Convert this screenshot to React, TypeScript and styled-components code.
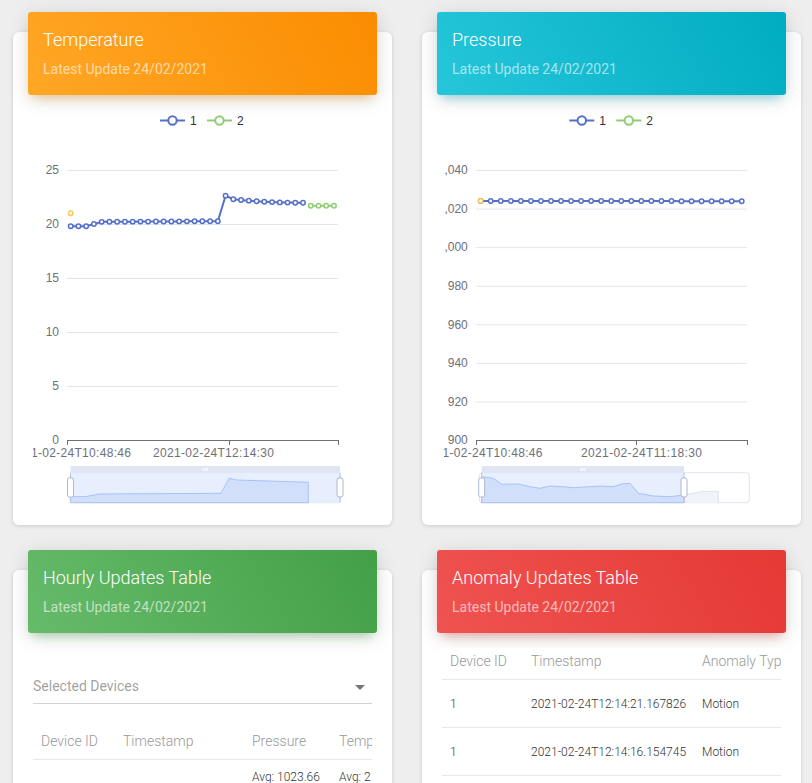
import styled, { createGlobalStyle } from "styled-components";

const GlobalStyle = createGlobalStyle`
	body {
		margin: 0;
		background: #eeeeee;
		font-family: Roboto, "Helvetica Neue", Arial, sans-serif;
	}
`;

const tones = {
	orange: { bg: "linear-gradient(60deg, #ffa726, #fb8c00)", glow: "rgba(255, 152, 0, 0.4)" },
	cyan: { bg: "linear-gradient(60deg, #26c6da, #00acc1)", glow: "rgba(0, 188, 212, 0.4)" },
	green: { bg: "linear-gradient(60deg, #66bb6a, #43a047)", glow: "rgba(76, 175, 80, 0.4)" },
	red: { bg: "linear-gradient(60deg, #ef5350, #e53935)", glow: "rgba(244, 67, 54, 0.4)" },
};

type Tone = keyof typeof tones;

const Page = styled.div`
	display: grid;
	grid-template-columns: 379px 379px;
	column-gap: 30px;
	row-gap: 45px;
	padding: 32px 11px 0 13px;
	align-items: start;
`;

const Card = styled.section`
	background: #fff;
	border-radius: 6px;
	box-shadow: 0 1px 4px 0 rgba(0, 0, 0, 0.14);
	display: flex;
	flex-direction: column;
`;

const CardHeader = styled.div<{ $tone: Tone }>`
	margin: -20px 15px 0;
	padding: 15px;
	border-radius: 3px;
	background: ${(p) => tones[p.$tone].bg};
	box-shadow: 0 4px 20px 0 rgba(0, 0, 0, 0.14), 0 7px 10px -5px ${(p) => tones[p.$tone].glow};
	color: #fff;
`;

const Title = styled.h4`
	margin: 0 0 7px;
	font-size: 18px;
	line-height: 25px;
	font-weight: 300;
`;

const Category = styled.p`
	margin: 0;
	font-size: 14px;
	line-height: 21px;
	font-weight: 400;
	color: rgba(255, 255, 255, 0.62);
`;

const ChartBody = styled.div<{ $inset: number }>`
	margin-top: 10px;
	padding: 0 0 15px ${(p) => p.$inset}px;

	svg {
		display: block;
		font-family: "Liberation Sans", Arial, sans-serif;
	}
`;

const TableBody = styled.div<{ $gap: number }>`
	margin-top: ${(p) => p.$gap}px;
	padding: 0 20px 20px;
`;

const SelectField = styled.div`
	position: relative;
	padding: 6px 0 7px;
	border-bottom: 1px solid #d2d2d2;
	font-size: 14px;
	line-height: 20px;
	color: rgba(0, 0, 0, 0.4);

	svg {
		position: absolute;
		right: 0;
		top: 5px;
		fill: rgba(0, 0, 0, 0.54);
	}
`;

const TableScroll = styled.div<{ $top: number }>`
	margin-top: ${(p) => p.$top}px;
	overflow: hidden;
	background: #fff;
`;

const Table = styled.table<{ $width: number }>`
	width: ${(p) => p.$width}px;
	table-layout: fixed;
	border-collapse: collapse;
`;

const HeadCell = styled.th<{ $w: number }>`
	box-sizing: border-box;
	width: ${(p) => p.$w}px;
	padding: 5px 8px 10px;
	text-align: left;
	font-size: 14px;
	line-height: 16px;
	font-weight: 300;
	color: #999;
	white-space: nowrap;
	overflow: hidden;
	border-bottom: 1px solid #e8e8e8;
`;

const Cell = styled.td<{ $dense?: boolean }>`
	box-sizing: border-box;
	padding: ${(p) => (p.$dense ? "10px 8px 10px" : "16px 8px 15px")};
	font-size: 12px;
	line-height: ${(p) => (p.$dense ? "14px" : "16px")};
	font-weight: 300;
	color: #333;
	white-space: nowrap;
	overflow: hidden;
	vertical-align: top;
	border-bottom: 1px solid #e8e8e8;
`;

/* ---------- chart ---------- */

const BLUE = "#5470c6";
const GREEN = "#91cc75";
const ORANGE = "#fac858";
const AXIS = "#6e7079";
const GRID = "#e0e6f1";

interface Series {
	color: string;
	start: number;
	values: number[];
}

interface ChartSpec {
	left: number;
	legendX: number;
	gridX: [number, number];
	labelEnd: number;
	yTicks: { label: string; value: number }[];
	yOf: (v: number) => number;
	xTicks: number[];
	xLabels: { text: string; x: number; anchor: "start" | "end" }[];
	x0: number;
	dx: number;
	series: Series[];
	slider: {
		from: number;
		to: number;
		sel: [number, number];
		selPath: string;
		restPath?: string;
	};
}

const SliderBox = ({ s }: { s: ChartSpec["slider"] }) => {
	const top = 466;
	const bodyTop = 472.7;
	const bottom = 502.7;
	const mid = (s.sel[0] + s.sel[1]) / 2;
	return (
		<g>
			<rect x={s.from} y={bodyTop} width={s.to - s.from} height={bottom - bodyTop} rx={3} fill="none" stroke="#dde3f0" />
			<rect x={s.sel[0]} y={bodyTop} width={s.sel[1] - s.sel[0]} height={bottom - bodyTop} fill="#e7eefd" />
			{s.restPath && <path d={s.restPath} fill="#f1f3f8" stroke="#dde3ee" strokeWidth={1} />}
			<path d={s.selPath} fill="#d1dffa" stroke="#a9c2f6" strokeWidth={1} />
			<rect x={s.sel[0]} y={top} width={s.sel[1] - s.sel[0]} height={bodyTop - top} fill="#dfe5f2" />
			{[-2, 0, 2].map((o) => (
				<line key={o} x1={mid + o} x2={mid + o} y1={top + 2} y2={top + 5} stroke="#fff" strokeWidth={1} />
			))}
			{s.sel.map((x) => (
				<g key={x}>
					<line x1={x} x2={x} y1={bodyTop} y2={bottom} stroke="#b8c3d8" strokeWidth={1} />
					<rect x={x - 3} y={478} width={6} height={19} rx={2} fill="#fff" stroke="#aeb9cf" strokeWidth={1} />
				</g>
			))}
		</g>
	);
};

const LineChart = ({ spec, inset }: { spec: ChartSpec; inset: number }) => {
	const { yOf } = spec;
	const axisY = yOf(spec.yTicks[0].value);
	const width = 361 - inset;
	return (
		<svg width={width} height={405} viewBox={`${spec.left} 105 ${width} 405`}>
			{[
				{ c: BLUE, x: spec.legendX, t: "1" },
				{ c: GREEN, x: spec.legendX + 47, t: "2" },
			].map((l) => (
				<g key={l.t}>
					<line x1={l.x} x2={l.x + 25} y1={120.5} y2={120.5} stroke={l.c} strokeWidth={2} />
					<circle cx={l.x + 12.5} cy={120.5} r={4.2} fill="#fff" stroke={l.c} strokeWidth={2} />
					<text x={l.x + 30} y={124.8} fontSize={12} fill="#333">
						{l.t}
					</text>
				</g>
			))}

			{spec.yTicks.map((t) => (
				<g key={t.label}>
					{t.value !== spec.yTicks[0].value && (
						<line x1={spec.gridX[0]} x2={spec.gridX[1]} y1={yOf(t.value) + 0.5} y2={yOf(t.value) + 0.5} stroke={GRID} />
					)}
					<text x={spec.labelEnd} y={yOf(t.value) + 4.3} fontSize={12} fill={AXIS} textAnchor="end">
						{t.label}
					</text>
				</g>
			))}

			<line x1={spec.gridX[0]} x2={spec.gridX[1] + 0.5} y1={axisY + 0.5} y2={axisY + 0.5} stroke={AXIS} />
			{spec.xTicks.map((x) => (
				<line key={x} x1={x} x2={x} y1={axisY} y2={axisY + 5} stroke={AXIS} />
			))}
			{spec.xLabels.map((l) => (
				<text
					key={l.text}
					x={l.x}
					y={457}
					fontSize={12}
					fill={AXIS}
					textAnchor={l.anchor}
					textLength={121}
					lengthAdjust="spacing"
				>
					{l.text}
				</text>
			))}

			{spec.series.map((s, si) => {
				const pts = s.values.map((v, i) => [spec.x0 + (s.start + i) * spec.dx, yOf(v)]);
				return (
					<g key={si}>
						{pts.length > 1 && (
							<polyline
								points={pts.map((p) => p.join(",")).join(" ")}
								fill="none"
								stroke={s.color}
								strokeWidth={2}
								strokeLinejoin="round"
							/>
						)}
						{pts.map(([x, y], i) => (
							<circle key={i} cx={x} cy={y} r={2.2} fill="#fff" stroke={s.color} strokeWidth={1.5} />
						))}
					</g>
				);
			})}

			<SliderBox s={spec.slider} />
		</svg>
	);
};

const tempBlue = [
	19.79, 19.79, 19.79, 20.0,
	...Array.from({ length: 16 }, (_, i) => 20.2 + i * 0.004),
	22.62, 22.29, 22.22, 22.16, 22.1, 22.06, 22.03, 22.0, 21.98, 21.97, 21.97,
];

const temperatureSpec: ChartSpec = {
	left: 33,
	legendX: 160,
	gridX: [67, 338],
	labelEnd: 59,
	yTicks: [0, 5, 10, 15, 20, 25].map((v) => ({ label: String(v), value: v })),
	yOf: (v) => 440 - v * 10.8,
	xTicks: [67.5, 229.5, 338.5],
	xLabels: [
		{ text: "2021-02-24T10:48:46", x: 131, anchor: "end" },
		{ text: "2021-02-24T12:14:30", x: 153, anchor: "start" },
	],
	x0: 70.7,
	dx: 7.744,
	series: [
		{ color: BLUE, start: 0, values: tempBlue },
		{ color: GREEN, start: 31, values: [21.69, 21.69, 21.69, 21.69] },
		{ color: ORANGE, start: 0, values: [20.99] },
	],
	slider: {
		from: 70,
		to: 340.7,
		sel: [70.5, 340],
		selPath:
			"M70.5,502.7 L70.5,496.7 L85,496.7 L100,494 L221,493.3 L229,478.3 L236.7,480 L308.3,482.3 L308.3,502.7 Z",
	},
};

const pressureSpec: ChartSpec = {
	left: 444,
	legendX: 569.3,
	gridX: [476, 747],
	labelEnd: 467.8,
	yTicks: [900, 920, 940, 960, 980, 1000, 1020, 1040].map((v) => ({ label: v.toLocaleString("en-US"), value: v })),
	yOf: (v) => 440 - (v - 900) * 1.9286,
	xTicks: [476.5, 636.5, 747.5],
	xLabels: [
		{ text: "2021-02-24T10:48:46", x: 542.5, anchor: "end" },
		{ text: "2021-02-24T11:18:30", x: 581, anchor: "start" },
	],
	x0: 480.7,
	dx: 10.04,
	series: [
		{
			color: BLUE,
			start: 0,
			values: Array.from({ length: 27 }, (_, i) => (i < 20 ? 1023.95 : 1023.8)),
		},
		{ color: ORANGE, start: 0, values: [1023.95] },
	],
	slider: {
		from: 479.3,
		to: 749.3,
		sel: [481.7, 684],
		selPath:
			"M481.7,502.7 L481.7,476.7 L493.3,478.3 L501.7,484.3 L518.3,484 L530,486.7 L540,488.3 L550,486 L563.3,486.7 L573.3,487.7 L590,486.7 L600,486 L613.3,486.7 L621.7,484 L630,483.3 L638.3,493.3 L653.3,496 L670,496.7 L684,495 L684,502.7 Z",
		restPath: "M684,502.7 L684,495 L703.3,491.3 L718.3,491.3 L718.3,502.7",
	},
};

/* ---------- tables ---------- */

const hourlyCols = [
	{ name: "Device ID", w: 82 },
	{ name: "Timestamp", w: 129 },
	{ name: "Pressure", w: 87 },
	{ name: "Temperature", w: 96 },
	{ name: "Humidity", w: 90 },
];

const hourlyRows = [
	["", "", "Avg: 1023.66\nMin: 1023.10\nMax: 1024.02", "Avg: 21.08\nMin: 19.79\nMax: 22.62", "Avg: 41.20\nMin: 39.80\nMax: 43.10"],
];

const anomalyCols = [
	{ name: "Device ID", w: 81 },
	{ name: "Timestamp", w: 171 },
	{ name: "Anomaly Type", w: 120 },
];

const anomalyRows = [
	["1", "2021-02-24T12:14:21.167826", "Motion"],
	["1", "2021-02-24T12:14:16.154745", "Motion"],
	["1", "2021-02-24T12:14:11.142017", "Motion"],
];

const Multi = styled.span`
	white-space: pre;
`;

const ChartCard = ({ tone, title, spec, inset }: { tone: Tone; title: string; spec: ChartSpec; inset: number }) => (
	<Card>
		<CardHeader $tone={tone}>
			<Title>{title}</Title>
			<Category>Latest Update 24/02/2021</Category>
		</CardHeader>
		<ChartBody $inset={inset}>
			<LineChart spec={spec} inset={inset} />
		</ChartBody>
	</Card>
);

const App = () => {
	return (
		<>
			<GlobalStyle />
			<Page>
				<ChartCard tone="orange" title="Temperature" spec={temperatureSpec} inset={20} />
				<ChartCard tone="cyan" title="Pressure" spec={pressureSpec} inset={22} />

				<Card>
					<CardHeader $tone="green">
						<Title>Hourly Updates Table</Title>
						<Category>Latest Update 24/02/2021</Category>
					</CardHeader>
					<TableBody $gap={37}>
						<SelectField>
							Selected Devices
							<svg width={24} height={24} viewBox="0 0 24 24">
								<path d="M7 10l5 5 5-5z" />
							</svg>
						</SelectField>
						<TableScroll $top={24}>
							<Table $width={hourlyCols.reduce((a, c) => a + c.w, 0)}>
								<thead>
									<tr>
										{hourlyCols.map((c) => (
											<HeadCell key={c.name} $w={c.w}>
												{c.name}
											</HeadCell>
										))}
									</tr>
								</thead>
								<tbody>
									{hourlyRows.map((r, i) => (
										<tr key={i}>
											{r.map((v, j) => (
												<Cell key={j} $dense>
													<Multi>{v}</Multi>
												</Cell>
											))}
										</tr>
									))}
								</tbody>
							</Table>
						</TableScroll>
					</TableBody>
				</Card>

				<Card>
					<CardHeader $tone="red">
						<Title>Anomaly Updates Table</Title>
						<Category>Latest Update 24/02/2021</Category>
					</CardHeader>
					<TableBody $gap={15}>
						<TableScroll $top={0}>
							<Table $width={anomalyCols.reduce((a, c) => a + c.w, 0)}>
								<thead>
									<tr>
										{anomalyCols.map((c) => (
											<HeadCell key={c.name} $w={c.w}>
												{c.name}
											</HeadCell>
										))}
									</tr>
								</thead>
								<tbody>
									{anomalyRows.map((r, i) => (
										<tr key={i}>
											{r.map((v, j) => (
												<Cell key={j}>{v}</Cell>
											))}
										</tr>
									))}
								</tbody>
							</Table>
						</TableScroll>
					</TableBody>
				</Card>
			</Page>
		</>
	);
};

export default App;
